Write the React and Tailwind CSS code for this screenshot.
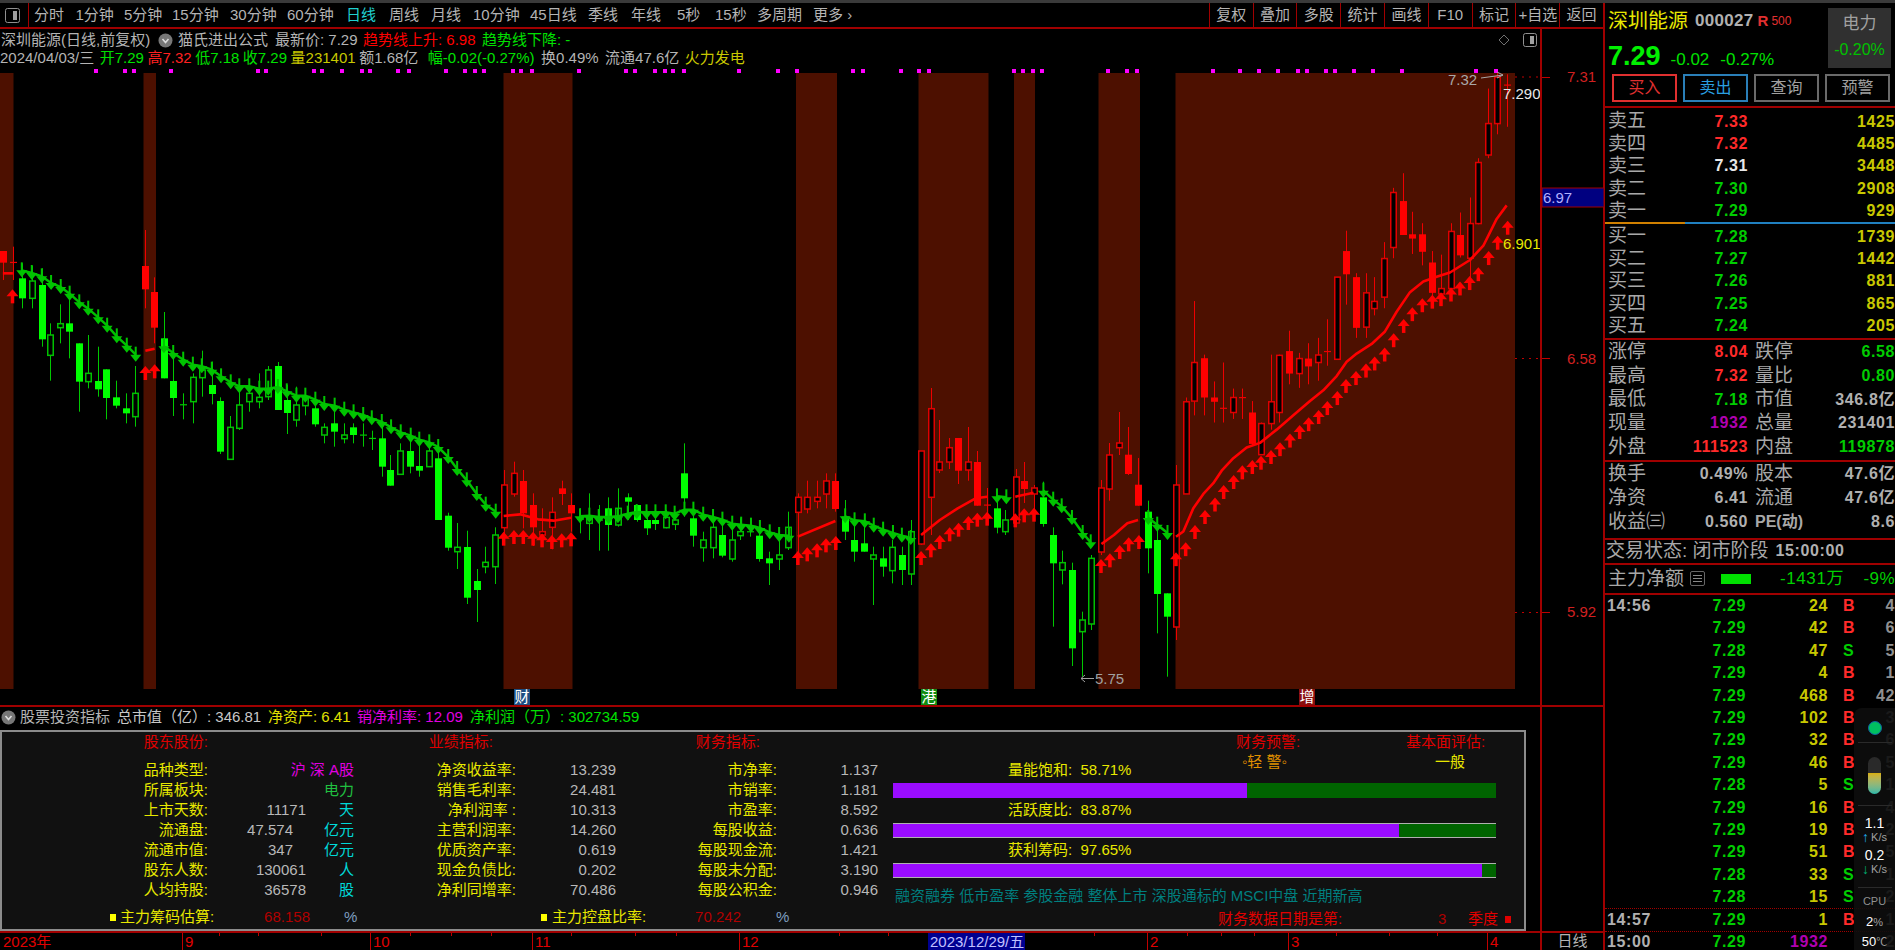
import React from "react";

const RED = "#ff0000";
const GREEN = "#00ff00";
const SHADE = "#4d1000";
const LINE = "border-[#a00000]";

const ca = (x, y) => [x / 2.8, y / 3 + 230];
const cb = (x, y) => [x / 2.24 + 480, y / 3 + 420];
const cc = (x, y) => [x / 3 + 1150, y / 2.8 + 60];
const ident = (x, y) => [x, y];

const conv = (rows, f, up) =>
  rows.map(([x, h, t, b, l, fill]) => ({
    x: f(x, 0)[0],
    h: f(0, h)[1],
    t: f(0, t)[1],
    b: f(0, b)[1],
    l: f(0, l)[1],
    fill,
    up,
  }));

const bars = [
  ...conv([[8, 63, 63, 98, 150, 1], [36, 50, 97, 97, 150, 2], [407, 0, 108, 178, 235, 1], [431, 142, 186, 293, 340, 1]], ca, true),
  ...conv(
    [
      [61, 100, 145, 205, 235, 1], [89, 108, 153, 205, 235, 0], [117, 115, 165, 328, 350, 1], [141, 280, 315, 376, 452, 0],
      [169, 223, 281, 293, 340, 0], [193, 170, 280, 305, 385, 1], [221, 340, 340, 455, 545, 1], [246, 315, 430, 455, 475, 0],
      [274, 350, 453, 478, 500, 1], [298, 418, 418, 504, 568, 1], [326, 452, 502, 527, 535, 1], [354, 490, 535, 550, 580, 1],
      [379, 408, 490, 560, 590, 0], [459, 246, 325, 445, 445, 1], [485, 350, 453, 504, 558, 1], [513, 490, 524, 524, 568, 2],
      [540, 430, 442, 515, 580, 0], [565, 362, 420, 443, 500, 0], [593, 395, 465, 492, 523, 1], [617, 502, 513, 665, 672, 1],
      [645, 558, 592, 688, 690, 0], [670, 455, 525, 595, 600, 0], [698, 455, 490, 515, 545, 0], [726, 430, 502, 515, 535, 0],
      [751, 408, 420, 500, 510, 0], [778, 396, 408, 540, 540, 1], [803, 465, 510, 549, 612, 1], [830, 470, 525, 570, 590, 0],
      [855, 475, 505, 527, 556, 0], [883, 490, 535, 583, 590, 1], [908, 580, 592, 615, 640, 0], [935, 530, 580, 605, 650, 1],
      [964, 580, 615, 626, 640, 0], [988, 580, 592, 615, 640, 1], [1017, 580, 615, 615, 650, 2], [1041, 602, 625, 625, 660, 2],
      [1069, 575, 625, 710, 740, 1], [1093, 675, 720, 767, 767, 1], [1121, 640, 663, 733, 735, 0], [1149, 600, 663, 710, 730, 1],
      [1174, 625, 708, 722, 740, 1], [1202, 615, 663, 710, 710, 0], [1227, 630, 685, 870, 870, 1],
    ],
    ca,
    false
  ),
  ...conv(
    [
      [448, 512.7, 515.7, 547.7, 550.7, 1], [456.7, 523, 547.3, 551.7, 569, 0], [466.7, 530.7, 547, 597.7, 604, 1],
      [476.7, 569, 581, 590, 622, 1], [485.3, 546.7, 562.3, 566.7, 573.3, 0], [495.3, 527.3, 535, 566.7, 584, 0],
    ],
    ident,
    false
  ),
  ...conv(
    [
      [53, 150, 195, 323, 375, 0], [76, 125, 160, 222, 230, 0], [97, 150, 183, 280, 325, 1], [119, 220, 255, 322, 378, 1],
      [139, 265, 335, 345, 368, 0], [161, 232, 277, 322, 388, 0], [183, 182, 205, 222, 255, 1], [204, 220, 255, 280, 335, 1],
      [712, 220, 232, 277, 420, 0], [732, 182, 232, 267, 280, 0], [754, 182, 232, 244, 265, 0], [775, 160, 183, 222, 265, 0],
      [796, 160, 183, 267, 275, 1],
    ],
    cb,
    true
  ),
  ...conv(
    [
      [224, 265, 297, 297, 340, 2], [245, 220, 290, 310, 360, 0], [266, 255, 300, 300, 392, 2], [287, 232, 265, 315, 392, 1],
      [309, 205, 265, 315, 320, 0], [331, 220, 232, 245, 300, 1], [351, 260, 255, 300, 305, 1], [373, 280, 300, 325, 345, 1],
      [393, 275, 300, 312, 330, 1], [416, 270, 292, 323, 325, 0], [436, 290, 300, 313, 330, 0], [458, 70, 160, 235, 290, 1],
      [477, 250, 295, 347, 380, 1], [499, 335, 360, 383, 425, 0], [521, 280, 322, 383, 415, 0], [541, 300, 345, 407, 412, 1],
      [564, 300, 360, 417, 425, 0], [583, 295, 335, 347, 360, 0], [605, 320, 335, 335, 350, 2], [626, 310, 347, 417, 425, 1],
      [648, 395, 415, 430, 495, 1], [670, 340, 405, 417, 450, 0], [690, 275, 322, 383, 390, 0], [818, 240, 290, 335, 360, 1],
      [838, 290, 360, 395, 425, 1], [860, 310, 370, 395, 395, 1], [880, 380, 405, 417, 555, 0], [902, 380, 415, 440, 470, 1],
      [923, 360, 382, 452, 490, 0], [945, 380, 405, 450, 495, 1], [965, 300, 335, 462, 495, 0], [1158, 240, 265, 323, 340, 1],
      [1177, 270, 300, 335, 345, 0], [1262, 185, 232, 312, 320, 1], [1284, 322, 345, 430, 620, 1], [1303, 392, 428, 450, 493, 0],
      [1326, 428, 450, 685, 738, 1], [1348, 575, 600, 635, 770, 0], [1368, 405, 415, 612, 630, 0], [1497, 242, 275, 385, 460, 1],
      [1517, 300, 360, 522, 640, 1], [1538, 520, 520, 590, 770, 1],
    ],
    cb,
    false
  ),
  ...conv(
    [
      [920.7, 451, 451, 544, 545, 0], [930.7, 388, 408.7, 497.3, 535, 0], [939, 420, 462, 470, 473, 0], [949, 438, 447.7, 462, 469, 0],
      [958, 438, 438, 470.7, 484, 1], [968, 427, 462, 470, 480.7, 0], [976.7, 451, 462, 505.7, 505.7, 1], [987, 488, 505, 505, 520, 2],
      [1015.7, 469, 477, 523, 527, 0], [1024, 462, 481, 489, 503, 1], [1034, 485, 488, 494, 513, 0], [1100.7, 480, 488, 552, 555, 0],
      [1109, 443, 455, 489, 500.7, 0], [1119, 412, 443, 447.7, 455, 0], [1128, 427, 454.7, 474, 475, 1], [1138, 458, 484.7, 505.7, 505.7, 1],
      [1175.5, 465, 485, 627, 640, 0],
    ],
    ident,
    true
  ),
  ...conv(
    [
      [107, 945, 957, 1215, 1215, 0], [133, 675, 847, 955, 995, 0], [163, 825, 835, 945, 995, 1], [193, 900, 945, 957, 1015, 1],
      [219, 847, 975, 975, 1015, 2], [249, 920, 945, 987, 1005, 0], [275, 920, 945, 945, 1005, 2], [306, 955, 987, 1075, 1080, 1],
      [332, 1015, 1018, 1105, 1105, 0], [362, 825, 957, 1018, 1035, 0], [388, 825, 827, 987, 1015, 0], [418, 758, 815, 878, 908, 1],
      [448, 820, 836, 878, 918, 0], [475, 793, 836, 858, 908, 1], [504, 778, 826, 847, 898, 0], [530, 726, 816, 816, 856, 2],
      [561, 608, 608, 838, 838, 0], [587, 478, 535, 600, 685, 1], [617, 597, 608, 750, 778, 1], [647, 597, 652, 748, 778, 0],
      [673, 608, 676, 696, 715, 0], [703, 510, 556, 664, 695, 0], [729, 358, 371, 525, 555, 0], [759, 317, 395, 490, 490, 1],
      [786, 425, 488, 500, 543, 1], [816, 457, 488, 537, 575, 1], [846, 535, 567, 652, 680, 1], [872, 545, 640, 655, 660, 0],
      [902, 457, 480, 640, 640, 0], [929, 427, 490, 547, 553, 1], [959, 385, 458, 555, 615, 0], [985, 275, 287, 458, 460, 0],
      [1015, 80, 178, 266, 275, 0], [1041, 37, 48, 178, 208, 0], [1071, 40, 70, 70, 187, 2],
    ],
    cc,
    true
  ),
];

const shades = [[0, 13.5], [143.5, 156], [503.5, 572.5], [796, 837], [918.5, 988.5], [1014, 1035], [1098.5, 1140], [1175.5, 1515]];
const dots = [96, 125, 134, 171, 258, 266, 314, 322, 342, 362, 370, 398, 409, 446, 465, 475, 484, 513, 521, 532, 579, 626, 635, 655, 665, 673, 684, 739, 778, 797, 853, 863, 901, 919, 929, 1014, 1023, 1033, 1042, 1108, 1127, 1137, 1213, 1240, 1259, 1278, 1298, 1307, 1326, 1335, 1354, 1373, 1402, 1476, 1496];

const seg = (f, pts) => pts.map(([x, y]) => f(x, y));

const redLines = [
  seg(ca, [[8, 130], [36, 130]]),
  seg(ca, [[407, 362], [433, 356]]),
  seg(cb, [[53, 288], [90, 283], [130, 298], [165, 302], [204, 293]]),
  seg(cb, [[712, 350], [796, 303]]),
  seg(cb, [[988, 345], [1030, 300], [1070, 265], [1110, 235], [1136, 230]]),
  seg(cb, [[1199, 230], [1240, 218]]),
  seg(cb, [[1392, 372], [1420, 345], [1450, 310], [1474, 300]]),
  seg(cc, [[78, 1335], [100, 1320], [130, 1255], [160, 1215], [190, 1185], [215, 1150], [250, 1115], [290, 1085], [330, 1072], [380, 1035], [430, 995], [480, 955], [520, 925], [560, 885], [590, 845], [620, 822], [665, 795], [705, 760], [740, 705], [780, 650], [820, 620], [860, 607], [900, 595], [960, 560], [1000, 520], [1040, 445], [1070, 407]]),
];

const upArrows = [
  ...seg(ca, [[35, 178], [407, 408], [433, 403]]),
  ...seg(cb, [[53, 335], [76, 330], [97, 330], [119, 335], [139, 340], [161, 345], [183, 340], [204, 337], [712, 393], [733, 382], [755, 370], [775, 355], [797, 348], [988, 393], [1010, 370], [1030, 345], [1052, 322], [1072, 308], [1094, 288], [1114, 278], [1136, 275], [1199, 280], [1219, 265], [1241, 263], [1391, 417], [1411, 400], [1433, 375], [1453, 352], [1476, 345]]),
  ...seg(cc, [[78, 1378], [107, 1350], [135, 1302], [165, 1260], [195, 1225], [221, 1190], [251, 1162], [277, 1135], [307, 1120], [333, 1108], [363, 1092], [390, 1070], [420, 1046], [449, 1022], [476, 1000], [506, 980], [532, 955], [562, 927], [588, 893], [618, 871], [648, 850], [674, 830], [704, 805], [731, 765], [761, 725], [787, 692], [817, 667], [847, 657], [873, 650], [903, 637], [930, 620], [959, 605], [985, 580], [1016, 535], [1043, 492], [1073, 450]]),
];

const downSegs = [
  seg(ca, [[61, 142], [89, 150], [117, 160], [143, 180], [170, 192], [195, 212], [222, 238], [247, 257], [275, 283], [300, 308], [327, 340], [355, 368], [380, 395]]),
  seg(ca, [[459, 370], [485, 390], [513, 410], [540, 425], [565, 430], [593, 440], [619, 460], [646, 478], [670, 490], [698, 490], [726, 497], [751, 497], [778, 492], [803, 505], [830, 518], [855, 518], [883, 530], [908, 543], [937, 548], [964, 560], [990, 568], [1017, 576], [1041, 586], [1069, 597], [1095, 613], [1122, 628], [1150, 638], [1174, 650], [1202, 658], [1227, 672], [1255, 702], [1280, 738], [1307, 772], [1335, 813], [1360, 845], [1388, 866]]),
  seg(cb, [[224, 310], [245, 308], [266, 312], [288, 312], [309, 310], [331, 302], [351, 297], [373, 298], [393, 298], [416, 298], [436, 302], [458, 290], [478, 290], [500, 305], [522, 312], [543, 320], [565, 332], [585, 335], [607, 338], [627, 345], [649, 358], [670, 366], [692, 368]]),
  seg(cb, [[818, 310], [839, 322], [862, 325], [882, 338], [903, 350], [925, 360], [945, 368], [965, 375]]),
  seg(cb, [[1158, 250], [1179, 253]]),
  seg(cb, [[1262, 233], [1284, 260], [1303, 280], [1326, 315], [1350, 360], [1368, 388]]),
  seg(cb, [[1497, 315], [1517, 335], [1540, 360]]),
];

function Candle({ d }) {
  const cx = Math.round(d.x);
  const c = d.up ? RED : GREEN;
  const w = d.up ? "#ee0000" : "#00c800";
  const hollow = d.up ? "#e00000" : "#00c000";
  return (
    <g>
      <rect x={cx} y={d.h} width={1} height={d.l - d.h} fill={w} />
      {d.fill === 2 ? (
        <rect x={cx - 3} y={d.t - 0.5} width={7} height={1.2} fill={w} />
      ) : d.fill === 1 ? (
        <rect x={cx - 3} y={d.t} width={7} height={d.b - d.t} fill={c} />
      ) : (
        <rect x={cx - 2.25} y={d.t} width={5.5} height={d.b - d.t} fill="#000" stroke={hollow} strokeWidth={1.5} />
      )}
    </g>
  );
}

function ChartSvg() {
  const pl = (pts) => pts.map((p) => p.join(",")).join(" ");
  return (
    <svg width="1540" height="639" viewBox="0 66 1540 639" className="block">
      {dots.map((x) => (
        <rect key={x} x={x - 2} y={69} width={4} height={4} fill="#ff00ff" />
      ))}
      {shades.map(([a, b]) => (
        <rect key={a} x={a} y={73} width={b - a} height={616} fill={SHADE} />
      ))}
      <line x1="1515" y1="77" x2="1540" y2="77" stroke="#c00000" strokeDasharray="2 5" />
      <line x1="1515" y1="358.5" x2="1540" y2="358.5" stroke="#c00000" strokeDasharray="2 5" />
      <line x1="1515" y1="612.5" x2="1540" y2="612.5" stroke="#c00000" strokeDasharray="2 5" />
      {bars.map((d, i) => (
        <Candle key={i} d={d} />
      ))}
      {redLines.map((pts, i) => (
        <polyline key={i} points={pl(pts)} fill="none" stroke={RED} strokeWidth="2.6" strokeLinejoin="round" />
      ))}
      {downSegs.map((pts, i) => (
        <g key={i}>
          <polyline points={pl(pts.map(([x, y]) => [x, y - 7]))} fill="none" stroke="#00c000" strokeWidth="2.5" />
          {pts.map(([x, y], j) => (
            <g key={j} fill="#00c400">
              <rect x={x - 1} y={y - 15} width={2} height={10} />
              <polygon points={`${x - 5.5},${y - 7} ${x + 5.5},${y - 7} ${x},${y}`} />
            </g>
          ))}
        </g>
      ))}
      {upArrows.map(([x, y], i) => (
        <g key={i} fill={RED}>
          <polygon points={`${x},${y} ${x + 6},${y + 7} ${x - 6},${y + 7}`} />
          <rect x={x - 1.75} y={y + 6} width={3.5} height={8} />
        </g>
      ))}
      <g fontSize="15">
        <text x="1448" y="85" fill="#a8a8a8">7.32</text>
        <path d="M1481 78 L1503 75 M1497 72 L1503 75 L1497 78" stroke="#a8a8a8" fill="none" />
        <text x="1503" y="99" fill="#e8e8e8">7.290</text>
        <text x="1503" y="249" fill="#e8e800">6.901</text>
        <text x="1095" y="684" fill="#a0a0a0">5.75</text>
        <path d="M1081 678.5 H1094 M1085 675 L1081 678.5 L1085 682" stroke="#a0a0a0" fill="none" />
      </g>
      <g fontSize="15" fill="#fff" textAnchor="middle">
        <rect x="514" y="689" width="16" height="16" fill="#1d4f82" />
        <text x="522" y="702">财</text>
        <rect x="921" y="689" width="16" height="16" fill="#118a11" />
        <text x="929" y="702">港</text>
        <rect x="1299" y="689" width="16" height="16" fill="#8a0f0f" />
        <text x="1307" y="702">增</text>
      </g>
    </svg>
  );
}

function AxisSvg() {
  return (
    <svg width="62" height="676" viewBox="1542 29 62 676" className="block">
      <g stroke="#c00000">
        <line x1="1542" y1="77.5" x2="1550" y2="77.5" />
        <line x1="1542" y1="358.5" x2="1550" y2="358.5" />
        <line x1="1542" y1="612.5" x2="1550" y2="612.5" />
      </g>
      <g fontSize="15" fill="#d02020">
        <text x="1567" y="82">7.31</text>
        <text x="1567" y="364">6.58</text>
        <text x="1567" y="617">5.92</text>
      </g>
      <rect x="1542" y="188" width="62" height="19" fill="#000080" stroke="#a00000" />
      <text x="1543" y="203" fontSize="15" fill="#b0b0ff">6.97</text>
    </svg>
  );
}

function BottomAxis() {
  const minor = [219, 258, 321, 410, 451, 491, 571, 635, 676, 839, 888, 1094, 1187, 1221, 1254, 1336, 1389, 1437];
  const major = [
    [182, "9"],
    [370, "10"],
    [532, "11"],
    [739, "12"],
    [1147, "2"],
    [1288, "3"],
    [1487, "4"],
  ];
  return (
    <svg width="1540" height="17" viewBox="0 933 1540 17" className="block">
      <text x="3" y="947" fontSize="15" fill="#e00000">2023年</text>
      {minor.map((x) => (
        <line key={x} x1={x + 0.5} y1="933" x2={x + 0.5} y2="936" stroke="#c00000" />
      ))}
      {major.map(([x, t]) => (
        <g key={t}>
          <line x1={x + 0.5} y1="933" x2={x + 0.5} y2="950" stroke="#c00000" />
          <text x={x + 3} y="947" fontSize="15" fill="#e00000">{t}</text>
        </g>
      ))}
      <rect x="928" y="933" width="97" height="17" fill="#000090" />
      <text x="930" y="947" fontSize="15" fill="#c0c0ff">2023/12/29/五</text>
    </svg>
  );
}

const leftTabs = [["分时", 41.5], ["1分钟", 48.5], ["5分钟", 48], ["15分钟", 58], ["30分钟", 57], ["60分钟", 59], ["日线", 43], ["周线", 42], ["月线", 42], ["10分钟", 57], ["45日线", 58], ["季线", 43], ["年线", 46], ["5秒", 38], ["15秒", 42], ["多周期", 56], ["更多 ›", 48]];
const rightTabs = ["复权", "叠加", "多股", "统计", "画线", "F10", "标记", "+自选", "返回"];

function Toolbar() {
  return (
    <div className={`flex h-[26px] w-full border-b-2 ${LINE} text-[15px] text-[#b4b4b4]`}>
      <div className={`flex w-[29px] shrink-0 items-center border-r ${LINE} pl-[5px]`}>
        <svg width="15" height="15" viewBox="0 0 15 15">
          <rect x="0.5" y="0.5" width="14" height="14" rx="2" fill="none" stroke="#909090" />
          <rect x="8" y="3" width="4" height="9" fill="#a0a0a0" />
        </svg>
      </div>
      <div className="flex items-center pl-[5px]">
        {leftTabs.map(([t, w]) => (
          <div key={t} style={{ width: w }} className={`whitespace-nowrap ${t === "日线" ? "text-[#20d0d0]" : ""}`}>
            {t}
          </div>
        ))}
      </div>
      <div className="ml-auto flex">
        {rightTabs.map((t) => (
          <div key={t} className={`flex w-[43.8px] items-center justify-center whitespace-nowrap border-l ${LINE}`}>
            {t}
          </div>
        ))}
      </div>
    </div>
  );
}

function Collapse() {
  return (
    <svg width="15" height="15" viewBox="0 0 15 15" className="shrink-0">
      <circle cx="7.5" cy="7.5" r="7" fill="#777" />
      <path d="M4.5 6 L7.5 9.5 L10.5 6" stroke="#ddd" strokeWidth="1.6" fill="none" />
    </svg>
  );
}

function ChartHeader() {
  return (
    <div className="flex h-[37px] flex-col pt-[2px] text-[15px] leading-[18px]">
      <div className="flex h-[18px] items-center whitespace-nowrap text-[#b4b4b4]">
        <span className="ml-[1px] w-[157px]">深圳能源(日线,前复权)</span>
        <Collapse />
        <span className="ml-[5px] w-[97px]">猫氏进出公式</span>
        <span className="w-[88px]">最新价: 7.29</span>
        <span className="w-[119px] text-[#ff0000]">趋势线上升: 6.98</span>
        <span className="text-[#00e000]">趋势线下降: -</span>
        <svg width="12" height="12" viewBox="0 0 12 12" className="ml-[928px] shrink-0">
          <path d="M6 1 L11 6 L6 11 L1 6 Z" fill="none" stroke="#707070" />
        </svg>
        <svg width="14" height="14" viewBox="0 0 14 14" className="ml-[13px] shrink-0">
          <rect x="0.5" y="0.5" width="13" height="13" rx="2" fill="none" stroke="#909090" />
          <rect x="7" y="3" width="4" height="8" fill="#a0a0a0" />
        </svg>
      </div>
      <div className="flex h-[17px] items-center gap-[3.5px] whitespace-nowrap text-[#b4b4b4]">
        <span>2024/04/03/三</span>
        <span className="ml-[2px] text-[#00e000]">开7.29</span>
        <span className="text-[#ff2020]">高7.32</span>
        <span className="text-[#00e000]">低7.18</span>
        <span className="text-[#00e000]">收7.29</span>
        <span className="text-[#c8c800]">量231401</span>
        <span className="mr-[6px]">额1.68亿</span>
        <span className="mr-[3px] text-[#00e000]">幅-0.02(-0.27%)</span>
        <span className="mr-[3px]">换0.49%</span>
        <span>流通47.6亿</span>
        <span className="ml-[2px] text-[#c8c800]">火力发电</span>
      </div>
    </div>
  );
}

const col1 = [
  ["品种类型:", "", "沪 深 A股", "text-[#e000e0]", 0],
  ["所属板块:", "", "电力", "text-[#20c040]", 0],
  ["上市天数:", "11171", "天", "text-[#00d8d8]", 0],
  ["流通盘:", "47.574", "亿元", "text-[#00d8d8]", 13],
  ["流通市值:", "347", "亿元", "text-[#00d8d8]", 13],
  ["股东人数:", "130061", "人", "text-[#00d8d8]", 0],
  ["人均持股:", "36578", "股", "text-[#00d8d8]", 0],
];
const col2 = [["净资收益率:", "13.239"], ["销售毛利率:", "24.481"], ["净利润率 :", "10.313"], ["主营利润率:", "14.260"], ["优质资产率:", "0.619"], ["现金负债比:", "0.202"], ["净利同增率:", "70.486"]];
const col3 = [["市净率:", "1.137"], ["市销率:", "1.181"], ["市盈率:", "8.592"], ["每股收益:", "0.636"], ["每股现金流:", "1.421"], ["每股未分配:", "3.190"], ["每股公积金:", "0.946"]];

function InfoColumn({ title, titlePad, rows, lw, vw }) {
  return (
    <div className="flex flex-col" style={{ width: lw + vw }}>
      <div className="mb-[8px] h-[20px] whitespace-nowrap text-right leading-[20px] text-[#e00000]" style={{ width: lw, paddingRight: titlePad }}>
        {title}
      </div>
      {rows.map(([l, v]) => (
        <div key={l} className="flex h-[20px] items-center whitespace-nowrap">
          <span className="text-right text-[#e8e800]" style={{ width: lw }}>{l}</span>
          <span className="text-right text-[#b8b8b8]" style={{ width: vw }}>{v}</span>
        </div>
      ))}
    </div>
  );
}

function Meter({ label, value, pct, edge }) {
  return (
    <>
      <div className="h-[20px] whitespace-nowrap pl-[115px] leading-[20px] text-[#e8e800]">
        {label}:&nbsp;&nbsp;{value}
      </div>
      <div className={`mt-[3px] mb-[2px] flex h-[15px] w-[603px] bg-[#006400] ${edge ? "border-y border-[#b0b0b0]" : ""}`}>
        <div className="h-full bg-[#9a0cff]" style={{ width: `${pct}%` }} />
      </div>
    </>
  );
}

function Panel() {
  return (
    <div className="flex h-[201px] w-[1526px] border-2 border-[#8c8c8c] bg-[#111111] text-[15px]">
      <div className="flex w-[891px] shrink-0 flex-col">
        <div className="flex">
          <div className="flex w-[352px] flex-col">
            <div className="mb-[8px] h-[20px] w-[206px] text-right leading-[20px] text-[#e00000]">股东股份:</div>
            {col1.map(([l, v, u, c, pad]) => (
              <div key={l} className="flex h-[20px] items-center whitespace-nowrap">
                <span className="w-[206px] shrink-0 text-right text-[#e8e800]">{l}</span>
                {v ? (
                  <span className="w-[98px] shrink-0 text-right text-[#b8b8b8]" style={{ paddingRight: pad }}>{v}</span>
                ) : null}
                <span className={`ml-auto ${c}`}>{u}</span>
              </div>
            ))}
          </div>
          <InfoColumn title="业绩指标:" titlePad={23} rows={col2} lw={162} vw={100} />
          <InfoColumn title="财务指标:" titlePad={17} rows={col3} lw={161} vw={101} />
        </div>
        <div className="mt-[7px] flex h-[20px] items-center whitespace-nowrap pl-[108px]">
          <span className="h-[7px] w-[6px] bg-[#ffff00]" />
          <span className="ml-[4px] w-[97px] text-[#e8e800]">主力筹码估算:</span>
          <span className="w-[93px] text-right text-[#b00000]">68.158</span>
          <span className="ml-[34px] w-[197px] text-[#7f9fc0]">%</span>
          <span className="h-[7px] w-[6px] bg-[#ffff00]" />
          <span className="ml-[5px] w-[96px] text-[#e8e800]">主力控盘比率:</span>
          <span className="w-[93px] text-right text-[#b00000]">70.242</span>
          <span className="ml-[35px] text-[#7f9fc0]">%</span>
        </div>
      </div>
      <div className="flex flex-1 flex-col">
        <div className="flex h-[28px] whitespace-nowrap">
          <div className="ml-[343px] flex w-[170px] flex-col">
            <span className="h-[20px] leading-[20px] text-[#e00000]">财务预警:</span>
            <span className="ml-[6px] h-[20px] leading-[20px] text-[#e09000]">◦轻 警◦</span>
          </div>
          <div className="flex flex-col">
            <span className="h-[20px] leading-[20px] text-[#e00000]">基本面评估:</span>
            <span className="ml-[29px] h-[20px] leading-[20px] text-[#e8e800]">一般</span>
          </div>
        </div>
        <Meter label="量能饱和" value="58.71%" pct={58.71} />
        <Meter label="活跃度比" value="83.87%" pct={83.87} edge />
        <Meter label="获利筹码" value="97.65%" pct={97.65} edge />
        <div className="mt-[6px] h-[20px] whitespace-nowrap pl-[2px] leading-[20px] text-[#007f7f]">融资融券 低市盈率 参股金融 整体上市 深股通标的 MSCI中盘 近期新高</div>
        <div className="mt-[3px] flex h-[20px] items-center whitespace-nowrap pl-[325px] text-[#e00000]">
          <span className="w-[220px]">财务数据日期是第:</span>
          <span className="w-[30px] text-[#b00000]">3</span>
          <span className="w-[37px]">季度</span>
          <span className="h-[7px] w-[6px] bg-[#e00000]" />
        </div>
      </div>
    </div>
  );
}

const PR = "font-bold text-[16px] tracking-[0.6px]";
const asks = [["卖五", "7.33", "text-[#ff2a2a]", "1425"], ["卖四", "7.32", "text-[#ff2a2a]", "4485"], ["卖三", "7.31", "text-[#e8e8e8]", "3448"], ["卖二", "7.30", "text-[#00cc00]", "2908"], ["卖一", "7.29", "text-[#00cc00]", "929"]];
const bids = [["买一", "7.28", "1739"], ["买二", "7.27", "1442"], ["买三", "7.26", "881"], ["买四", "7.25", "865"], ["买五", "7.24", "205"]];
const stats1 = [
  ["涨停", "8.04", "text-[#ff2a2a]", "跌停", "6.58", "text-[#00cc00]"],
  ["最高", "7.32", "text-[#ff2a2a]", "量比", "0.80", "text-[#00cc00]"],
  ["最低", "7.18", "text-[#00cc00]", "市值", "346.8亿", "text-[#b0b0b0]"],
  ["现量", "1932", "text-[#b000b0]", "总量", "231401", "text-[#b0b0b0]"],
  ["外盘", "111523", "text-[#ff2a2a]", "内盘", "119878", "text-[#00cc00]"],
];
const stats2 = [
  ["换手", "0.49%", "text-[#b0b0b0]", "股本", "47.6亿", "text-[#b0b0b0]"],
  ["净资", "6.41", "text-[#b0b0b0]", "流通", "47.6亿", "text-[#b0b0b0]"],
  ["收益㈢", "0.560", "text-[#b0b0b0]", "PE(动)", "8.6", "text-[#b0b0b0]"],
];
const ticks = [
  ["14:56", "7.29", "24", "B", "4"], ["", "7.29", "42", "B", "6"], ["", "7.28", "47", "S", "5"], ["", "7.29", "4", "B", "1"],
  ["", "7.29", "468", "B", "42"], ["", "7.29", "102", "B", "3"], ["", "7.29", "32", "B", "6"], ["", "7.29", "46", "B", "5"],
  ["", "7.28", "5", "S", "1"], ["", "7.29", "16", "B", "4"], ["", "7.29", "19", "B", "2"], ["", "7.29", "51", "B", "5"],
  ["", "7.28", "33", "S", "1"], ["", "7.28", "15", "S", "2"], ["14:57", "7.29", "1", "B", "1"], ["15:00", "7.29", "1932", "", "2"],
];

function StatRow({ r, h }) {
  return (
    <div className={`flex ${h} items-center whitespace-nowrap pl-[3px]`}>
      <span className="w-[60px] shrink-0 text-[19px] text-[#a8a8a8]">{r[0]}</span>
      <span className={`w-[80px] shrink-0 text-right ${PR} ${r[2]}`}>{r[1]}</span>
      <span className={`ml-[7px] shrink-0 text-[#a8a8a8] ${r[3].startsWith("PE") ? "text-[16px] font-bold" : "text-[19px]"}`}>{r[3]}</span>
      <span className={`ml-auto text-right ${PR} ${r[5]}`}>{r[4]}</span>
    </div>
  );
}

function Widget() {
  return (
    <div className="absolute bottom-0 right-0 flex h-[242px] w-[41px] flex-col items-center rounded-tl-lg bg-[#0d0d0d]/90 text-center text-[#d0d0d0]">
      <div className="mt-[13px] h-[14px] w-[14px] shrink-0 rounded-full border border-[#1060a0] bg-[#00c060]" />
      <div className="mt-[7px] h-px w-[34px] shrink-0 bg-[#2a2a2a]" />
      <div className="mt-[14px] flex h-[37px] w-[13px] shrink-0 flex-col overflow-hidden rounded-full bg-[#2a2a2a]">
        <div className="mt-[16px] h-[21px] bg-gradient-to-b from-[#d8b000] to-[#20b8a8]" />
      </div>
      <div className="mt-[11px] h-px w-[34px] shrink-0 bg-[#2a2a2a]" />
      <div className="mt-[10px] text-[14px] leading-[15px] text-white">1.1</div>
      <div className="flex items-center gap-[2px] text-[11px] leading-[13px] text-[#a0a0a0]">
        <span className="text-[14px] font-bold text-[#20a8f0]">↑</span>K/s
      </div>
      <div className="mt-[4px] text-[14px] leading-[15px] text-white">0.2</div>
      <div className="flex items-center gap-[2px] text-[11px] leading-[13px] text-[#a0a0a0]">
        <span className="text-[14px] font-bold text-[#00b070]">↓</span>K/s
      </div>
      <div className="mt-[11px] h-px w-[34px] shrink-0 bg-[#2a2a2a]" />
      <div className="mt-[6px] text-[11px] leading-[14px] text-[#909090]">CPU</div>
      <div className="mt-[6px] text-[13px] leading-[16px] text-white">2<span className="text-[11px] text-[#a0a0a0]">%</span></div>
      <div className="mt-[4px] text-[13px] leading-[16px] text-white">50<span className="text-[11px] text-[#a0a0a0]">℃</span></div>
    </div>
  );
}

function RightPanel() {
  return (
    <div className="relative flex h-[947px] w-[290px] shrink-0 flex-col overflow-hidden">
      <div className={`flex h-[105px] shrink-0 flex-col border-b-2 ${LINE}`}>
        <div className="flex h-[65px]">
          <div className="flex flex-1 flex-col pl-[3px]">
            <div className="mt-[7px] flex h-[22px] items-center whitespace-nowrap">
              <span className="text-[20px] text-[#e8e800]">深圳能源</span>
              <span className="ml-[7px] text-[17px] font-bold tracking-[0.3px] text-[#b0b0b0]">000027</span>
              <span className="ml-[4px] text-[15px] font-bold text-[#e03030]">R</span>
              <span className="ml-[3px] text-[12px] text-[#e03030]">500</span>
            </div>
            <div className="mt-[8px] flex items-baseline whitespace-nowrap text-[#00e000]">
              <span className="text-[27px] font-bold leading-[32px] text-[#00f000]">7.29</span>
              <span className="ml-[10px] text-[17px]">-0.02</span>
              <span className="ml-[11px] text-[17px]">-0.27%</span>
            </div>
          </div>
          <div className="mr-[4px] mt-[5px] flex h-[60px] w-[63px] flex-col items-center bg-[#303030]">
            <span className="mt-[5px] text-[17px] leading-[22px] text-[#a0a0a0]">电力</span>
            <span className="mt-[5px] text-[16px] leading-[20px] text-[#00c000]">-0.20%</span>
          </div>
        </div>
        <div className="mt-[6px] flex gap-[6px] pl-[7px] text-[16px]">
          <div className="flex h-[28px] w-[65px] items-center justify-center border-2 border-[#e03030] text-[#e03030]">买入</div>
          <div className="flex h-[28px] w-[65px] items-center justify-center border-2 border-[#2a7fb8] text-[#2a9fe0]">卖出</div>
          <div className="flex h-[28px] w-[65px] items-center justify-center border-2 border-[#6a6a6a] text-[#a0a0a0]">查询</div>
          <div className="flex h-[28px] w-[65px] items-center justify-center border-2 border-[#6a6a6a] text-[#a0a0a0]">预警</div>
        </div>
      </div>
      <div className="shrink-0 pt-[2.5px]">
        {asks.map(([n, p, c, v]) => (
          <div key={n} className="flex h-[22.4px] items-center whitespace-nowrap pl-[3px]">
            <span className="w-[60px] text-[19px] text-[#a8a8a8]">{n}</span>
            <span className={`w-[80px] text-right ${PR} ${c}`}>{p}</span>
            <span className={`ml-auto ${PR} text-[#c8c800]`}>{v}</span>
          </div>
        ))}
      </div>
      <div className="flex h-[2px] shrink-0">
        <div className="w-[80px] bg-[#d08000]" />
        <div className="flex-1 bg-[#2080c0]" />
      </div>
      <div className={`shrink-0 border-b-2 pb-[1px] pt-[1px] ${LINE}`}>
        {bids.map(([n, p, v]) => (
          <div key={n} className="flex h-[22.4px] items-center whitespace-nowrap pl-[3px]">
            <span className="w-[60px] text-[19px] text-[#a8a8a8]">{n}</span>
            <span className={`w-[80px] text-right ${PR} text-[#00cc00]`}>{p}</span>
            <span className={`ml-auto ${PR} text-[#c8c800]`}>{v}</span>
          </div>
        ))}
      </div>
      <div className={`shrink-0 border-b-2 pb-[1px] ${LINE}`}>
        {stats1.map((r) => (
          <StatRow key={r[0]} r={r} h="h-[23.7px]" />
        ))}
      </div>
      <div className={`h-[78px] shrink-0 border-b-2 ${LINE}`}>
        {stats2.map((r) => (
          <StatRow key={r[0]} r={r} h="h-[24px]" />
        ))}
      </div>
      <div className={`flex h-[25px] shrink-0 items-center whitespace-nowrap border-b-2 pl-[1px] text-[19px] text-[#a8a8a8] ${LINE}`}>
        交易状态: 闭市阶段<span className={`ml-[7px] ${PR} text-[#b0b0b0]`}>15:00:00</span>
      </div>
      <div className={`flex h-[30px] shrink-0 items-center whitespace-nowrap border-b-2 pl-[3px] ${LINE}`}>
        <span className="w-[76px] text-[19px] text-[#a8a8a8]">主力净额</span>
        <span className="ml-[6px] flex h-[15px] w-[15px] flex-col justify-center gap-[2px] rounded-[2px] border border-[#666] px-[2px]">
          <span className="h-px bg-[#888]" />
          <span className="h-px bg-[#888]" />
          <span className="h-px bg-[#888]" />
        </span>
        <span className="ml-[16px] h-[10px] w-[30px] bg-[#00e000]" />
        <span className={`ml-[29px] text-[17px] tracking-[0.6px] text-[#00d000]`}>-1431万</span>
        <span className={`ml-auto text-[17px] tracking-[0.4px] text-[#00d000]`}>-9%</span>
      </div>
      <div className="flex-1">
        {ticks.map(([t, p, v, s, n], i) => (
          <div key={i} className={`flex h-[22.4px] items-center whitespace-nowrap pl-[2px] ${i >= 14 ? "border-t border-dotted border-[#a00000]" : ""}`}>
            <span className={`w-[51px] ${PR} text-[#b0b0b0]`}>{t}</span>
            <span className={`w-[88px] text-right ${PR} text-[#00cc00]`}>{p}</span>
            <span className={`w-[82px] text-right ${PR} ${v === "1932" ? "text-[#b000b0]" : "text-[#c8c800]"}`}>{v}</span>
            <span className={`ml-[15px] w-[12px] ${PR} ${s === "B" ? "text-[#ff2a2a]" : "text-[#00cc00]"}`}>{s}</span>
            <span className={`ml-auto ${PR} text-[#909090]`}>{n}</span>
          </div>
        ))}
      </div>
      <Widget />
    </div>
  );
}

export default function App() {
  return (
    <div className="flex h-[950px] w-[1895px] flex-col overflow-hidden bg-black font-['Liberation_Sans','Noto_Sans_CJK_SC',sans-serif]">
      <div className="h-[3px] shrink-0 bg-[#3a3a3a]" />
      <div className="flex flex-1">
        <div className={`flex w-[1605px] shrink-0 flex-col border-r-2 ${LINE}`}>
          <Toolbar />
          <div className={`flex h-[678px] shrink-0 border-b-2 ${LINE}`}>
            <div className="flex w-[1540px] shrink-0 flex-col">
              <ChartHeader />
              <ChartSvg />
            </div>
            <div className={`flex-1 border-l-2 ${LINE}`}>
              <AxisSvg />
            </div>
          </div>
          <div className="flex h-[224px] shrink-0">
            <div className="flex w-[1540px] shrink-0 flex-col">
              <div className="flex h-[23px] shrink-0 items-center whitespace-nowrap pb-[3px] text-[15px]">
                <span className="ml-[1px]"><Collapse /></span>
                <span className="ml-[4px] w-[97px] text-[#b4b4b4]">股票投资指标</span>
                <span className="w-[151px] text-[#c8c8c8]">总市值（亿）: 346.81</span>
                <span className="w-[89px] text-[#e0e000]">净资产: 6.41</span>
                <span className="w-[113px] text-[#e000e0]">销净利率: 12.09</span>
                <span className="text-[#00e000]">净利润（万）: 302734.59</span>
              </div>
              <Panel />
            </div>
            <div className={`flex-1 border-l-2 ${LINE}`} />
          </div>
          <div className={`flex h-[19px] shrink-0 border-t-2 ${LINE}`}>
            <div className="w-[1540px] shrink-0">
              <BottomAxis />
            </div>
            <div className={`flex flex-1 items-center justify-center border-l-2 text-[15px] text-[#b4b4b4] ${LINE}`}>日线</div>
          </div>
        </div>
        <RightPanel />
      </div>
    </div>
  );
}
